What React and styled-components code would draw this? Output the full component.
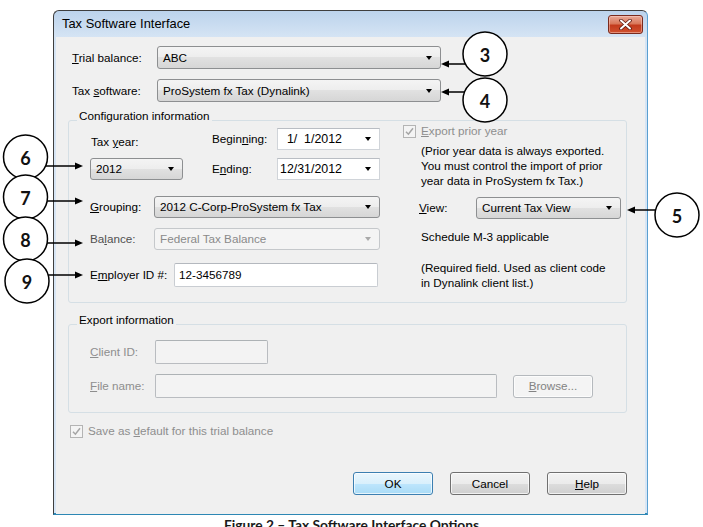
import React from 'react';
import styled, { createGlobalStyle } from 'styled-components';

const GlobalStyle = createGlobalStyle`
  html, body { margin: 0; padding: 0; background: #ffffff; }
  body {
    font-family: "Liberation Sans", Arial, sans-serif;
    font-size: 11.7px;
    line-height: 14px;
    color: #000;
  }
  * { box-sizing: border-box; }
`;

const Page = styled.div`
  position: relative;
  width: 703px;
  height: 527px;
  overflow: hidden;
  padding-top: 10px;
  display: flex;
  flex-direction: column;
`;

const Window = styled.div`
  margin-left: 53px;
  width: 595px;
  height: 505px;
  flex: none;
  display: flex;
  flex-direction: column;
  padding: 0 2px 2px;
  border: 1px solid #3e3e3e;
  border-right-color: #5a9fd0;
  border-bottom: 2px solid #2d87b4;
  border-radius: 6px 6px 0 0;
  background: linear-gradient(#bcd3ec, #d5e4f4 26px, #d8e6f5);
`;

const TitleBar = styled.div`
  height: 26px;
  flex: none;
  display: flex;
  align-items: center;
  justify-content: space-between;
  padding: 0 2px 0 6px;
`;

const Title = styled.span`
  font-size: 12.9px;
  color: #000;
`;

const CloseButton = styled.div`
  width: 35px;
  height: 19px;
  display: flex;
  align-items: center;
  justify-content: center;
  border: 1px solid #7a2a1d;
  border-radius: 3px;
  background: linear-gradient(#e9a897 0%, #d9785a 45%, #c33b1d 55%, #d0512f 100%);
  box-shadow: inset 0 0 0 1px rgba(255, 220, 210, 0.45);
`;

const Body = styled.div`
  flex: 1;
  display: flex;
  flex-direction: column;
  background: #f0f0f0;
  padding: 9px 18px 19px 12px;
`;

const Row = styled.div`
  display: flex;
  align-items: center;
  flex: none;
  height: ${p => p.$h || 22}px;
  margin-top: ${p => p.$mt || 0}px;
  padding-left: ${p => p.$pl || 0}px;
`;

const Label = styled.span`
  width: ${p => (p.$w ? `${p.$w}px` : 'auto')};
  margin-left: ${p => p.$ml || 0}px;
  margin-top: ${p => p.$mt || 0}px;
  flex: none;
  white-space: nowrap;
  color: ${p => (p.$dim ? '#8e8e8e' : p.$soft ? '#505050' : '#000')};
`;

const Key = styled.u`
  text-underline-offset: 1px;
`;

const Combo = styled.div`
  width: ${p => p.$w}px;
  height: 100%;
  flex: none;
  display: flex;
  align-items: center;
  justify-content: space-between;
  padding: 0 8px 0 5px;
  border: 1px solid ${p => (p.$disabled ? '#c5c8cb' : '#8d8f91')};
  border-radius: 3px;
  white-space: nowrap;
  color: ${p => (p.$disabled ? '#8a8a8a' : '#000')};
  background: ${p =>
    p.$disabled
      ? '#f4f4f4'
      : 'linear-gradient(#f4f4f4 0%, #ededed 50%, #e1e1e1 50%, #d6d6d6 100%)'};
`;

const Caret = styled.span`
  width: 0;
  height: 0;
  flex: none;
  border-left: 3.5px solid transparent;
  border-right: 3.5px solid transparent;
  border-top: 4px solid ${p => (p.$disabled ? '#a9a9a9' : '#000')};
`;

const DateBox = styled.div`
  width: 103px;
  height: 100%;
  flex: none;
  display: flex;
  align-items: center;
  justify-content: space-between;
  padding: 0 8px 0 2px;
  background: #fff;
  border: 1px solid #d0d4d9;
  border-top-color: #b9bdc3;
  white-space: pre;
  font-size: 12.4px;
`;

const TextBox = styled.div`
  width: ${p => p.$w}px;
  height: 100%;
  flex: none;
  display: flex;
  align-items: center;
  padding-left: 4px;
  background: ${p => (p.$disabled ? '#f3f3f3' : '#fff')};
  border: 1px solid ${p => (p.$disabled ? '#b9bcc0' : '#c9cdd2')};
  border-top-color: ${p => (p.$disabled ? '#adb2b5' : '#b4b8be')};
  border-radius: 2px;
`;

const Group = styled.div`
  position: relative;
  flex: none;
  display: flex;
  flex-direction: ${p => p.$dir || 'row'};
  width: 559px;
  margin-top: ${p => p.$mt}px;
  padding: ${p => p.$pad};
  border: 1px solid #d5dfe5;
  border-radius: 3px;
`;

const GroupTitle = styled.span`
  position: absolute;
  top: -12px;
  left: 8px;
  padding: 0 2px;
  background: #f0f0f0;
  white-space: nowrap;
`;

const LeftCol = styled.div`
  width: 290px;
  display: flex;
  flex-direction: column;
`;

const RightCol = styled.div`
  width: 218px;
  margin-left: 23px;
  margin-top: -4px;
  display: flex;
  flex-direction: column;
`;

const TopBlock = styled.div`
  display: flex;
  height: 52px;
`;

const YearCol = styled.div`
  width: 122px;
  display: flex;
  flex-direction: column;
`;

const DateCol = styled.div`
  display: flex;
  flex-direction: column;
`;

const Note = styled.div`
  margin-top: ${p => p.$mt}px;
  padding-left: 18px;
  line-height: ${p => p.$lh || 15}px;
  white-space: nowrap;
`;

const CheckBox = styled.span`
  width: 13px;
  height: 13px;
  flex: none;
  display: flex;
  align-items: center;
  justify-content: center;
  border: 1px solid #b4b4b4;
  background: #f4f4f4;
`;

const Button = styled.button`
  width: 80px;
  height: 23px;
  flex: none;
  margin-left: ${p => p.$ml || 0}px;
  padding: 0;
  font: inherit;
  display: flex;
  align-items: center;
  justify-content: center;
  border-radius: 3px;
  border: 1px solid ${p => (p.$default ? '#3c7fb1' : p.$disabled ? '#b5b9bd' : '#707070')};
  color: ${p => (p.$disabled ? '#838383' : '#000')};
  background: ${p =>
    p.$default
      ? 'linear-gradient(#eaf6fd 0%, #d9f0fc 50%, #bee6fd 50%, #a9dbf6 100%)'
      : p.$disabled
      ? '#f4f4f4'
      : 'linear-gradient(#f2f2f2 0%, #ebebeb 50%, #dddddd 50%, #cfcfcf 100%)'};
  box-shadow: inset 0 0 0 1px rgba(255, 255, 255, 0.7);
`;

const ButtonRow = styled.div`
  display: flex;
  justify-content: flex-end;
  gap: 17px;
  margin-top: 34px;
`;

const Caption = styled.div`
  margin-top: 2px;
  text-align: center;
  font-family: Lato, "Open Sans", sans-serif;
  font-weight: 700;
  font-size: 13.8px;
  line-height: 16px;
  color: #1a1a1a;
`;

const Overlay = styled.svg`
  position: absolute;
  left: 0;
  top: 0;
  pointer-events: none;
`;

const Tick = () => (
  <svg width="9" height="9" viewBox="0 0 9 9">
    <path d="M1 4.8 L3.4 7.2 L8 1.2" fill="none" stroke="#a5a5a5" strokeWidth="1.5" />
  </svg>
);

const callouts = [
  { n: 3, cx: 485, cy: 54, ay: 64, tip: 441, left: true },
  { n: 4, cx: 485, cy: 100, ay: 92, tip: 441, left: true },
  { n: 5, cx: 677, cy: 215, ay: 210, tip: 627, left: true },
  { n: 6, cx: 25.5, cy: 157, ay: 166, tip: 83, left: false },
  { n: 7, cx: 25.5, cy: 197, ay: 201, tip: 83, left: false },
  { n: 8, cx: 25.5, cy: 239, ay: 243, tip: 83, left: false },
  { n: 9, cx: 27, cy: 281, ay: 275, tip: 83, left: false },
];

const R = 22;

const Callouts = () => (
  <Overlay width="703" height="527" viewBox="0 0 703 527">
    {callouts.map(c => {
      const dx = Math.sqrt(R * R - (c.ay - c.cy) ** 2);
      const start = c.left ? c.cx - dx : c.cx + dx;
      const base = c.left ? c.tip + 8 : c.tip - 8;
      return (
        <g key={c.n}>
          <line x1={start} y1={c.ay} x2={base} y2={c.ay} stroke="#000" strokeWidth="1.5" />
          <polygon
            points={`${c.tip},${c.ay} ${base},${c.ay - 3.5} ${base},${c.ay + 3.5}`}
            fill="#000"
          />
          <circle cx={c.cx} cy={c.cy} r={R} fill="#fff" stroke="#000" strokeWidth="1.5" />
          <text
            x={c.cx}
            y={c.cy + 1}
            textAnchor="middle"
            dominantBaseline="central"
            fontFamily="Lato, 'Open Sans', sans-serif"
            fontWeight="700"
            fontSize="18"
            fill="#111"
          >
            {c.n}
          </text>
        </g>
      );
    })}
  </Overlay>
);

const App = () => (
  <Page>
    <GlobalStyle />
    <Window>
      <TitleBar>
        <Title>Tax Software Interface</Title>
        <CloseButton>
          <svg width="13" height="11" viewBox="0 0 13 11">
            <path d="M2 1.5 L11 9.5 M11 1.5 L2 9.5" stroke="#5a1a10" strokeWidth="3.6" strokeLinecap="round" />
            <path d="M2 1.5 L11 9.5 M11 1.5 L2 9.5" stroke="#fff" strokeWidth="2" strokeLinecap="round" />
          </svg>
        </CloseButton>
      </TitleBar>
      <Body>
        <Row $h={23} $pl={4}>
          <Label $w={85}><Key>T</Key>rial balance:</Label>
          <Combo $w={284}>ABC<Caret /></Combo>
        </Row>
        <Row $h={23} $mt={10} $pl={4}>
          <Label $w={85}>Tax <Key>s</Key>oftware:</Label>
          <Combo $w={284}>ProSystem fx Tax (Dynalink)<Caret /></Combo>
        </Row>

        <Group $mt={18} $pad="7px 5px 12px 21px">
          <GroupTitle>Configuration information</GroupTitle>
          <LeftCol>
            <TopBlock>
              <YearCol>
                <Label $mt={7} $ml={1}>Tax <Key>y</Key>ear:</Label>
                <Row $mt={9}>
                  <Combo $w={93}>2012<Caret /></Combo>
                </Row>
              </YearCol>
              <DateCol>
                <Row>
                  <Label $w={65}>Begin<Key>n</Key>ing:</Label>
                  <DateBox>{'\u20071/\u20071/2012'}<Caret /></DateBox>
                </Row>
                <Row $mt={8}>
                  <Label $w={65}>E<Key>n</Key>ding:</Label>
                  <DateBox>12/31/2012<Caret /></DateBox>
                </Row>
              </DateCol>
            </TopBlock>
            <Row $mt={16}>
              <Label $w={64}><Key>G</Key>rouping:</Label>
              <Combo $w={226}>2012 C-Corp-ProSystem fx Tax<Caret /></Combo>
            </Row>
            <Row $mt={10}>
              <Label $w={64} $soft>Ba<Key>l</Key>ance:</Label>
              <Combo $w={226} $disabled>Federal Tax Balance<Caret $disabled /></Combo>
            </Row>
            <Row $h={24} $mt={13}>
              <Label $w={84}>E<Key>m</Key>ployer ID #:</Label>
              <TextBox $w={204}>12-3456789</TextBox>
            </Row>
          </LeftCol>
          <RightCol>
            <Row $h={14}>
              <CheckBox><Tick /></CheckBox>
              <Label $ml={5} $dim><Key>E</Key>xport prior year</Label>
            </Row>
            <Note $mt={5}>
              (Prior year data is always exported.<br />
              You must control the import of prior<br />
              year data in ProSystem fx Tax.)
            </Note>
            <Row $mt={9} $pl={16}>
              <Label $w={57}><Key>V</Key>iew:</Label>
              <Combo $w={145}>Current Tax View<Caret /></Combo>
            </Row>
            <Note $mt={11} $lh={14}>Schedule M-3 applicable</Note>
            <Note $mt={16}>
              (Required field. Used as client code<br />
              in Dynalink client list.)
            </Note>
          </RightCol>
        </Group>

        <Group $mt={21} $dir="column" $pad="15px 0 14px 21px">
          <GroupTitle>Export information</GroupTitle>
          <Row $h={24}>
            <Label $w={65} $dim><Key>C</Key>lient ID:</Label>
            <TextBox $w={113} $disabled />
          </Row>
          <Row $h={24} $mt={10}>
            <Label $w={65} $dim><Key>F</Key>ile name:</Label>
            <TextBox $w={342} $disabled />
            <Button $disabled $ml={16}><Key>B</Key>rowse...</Button>
          </Row>
        </Group>

        <Row $h={14} $mt={11} $pl={2}>
          <CheckBox><Tick /></CheckBox>
          <Label $ml={5} $dim>Save as <Key>d</Key>efault for this trial balance</Label>
        </Row>

        <ButtonRow>
          <Button $default>OK</Button>
          <Button>Cancel</Button>
          <Button><Key>H</Key>elp</Button>
        </ButtonRow>
      </Body>
    </Window>
    <Caption>Figure 2 – Tax Software Interface Options</Caption>
    <Callouts />
  </Page>
);

export default App;
